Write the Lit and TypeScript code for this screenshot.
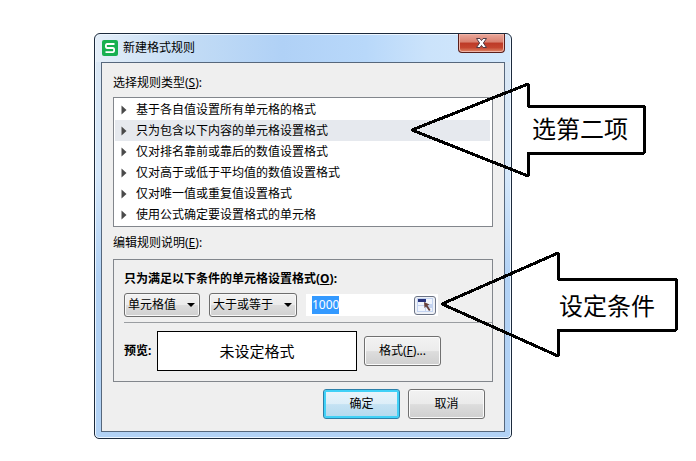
import { LitElement, html, css } from "lit";
import { customElement, state, query } from "lit/decorators.js";
import { classMap } from "lit/directives/class-map.js";

const RULE_TYPES = [
  "基于各自值设置所有单元格的格式",
  "只为包含以下内容的单元格设置格式",
  "仅对排名靠前或靠后的数值设置格式",
  "仅对高于或低于平均值的数值设置格式",
  "仅对唯一值或重复值设置格式",
  "使用公式确定要设置格式的单元格",
];

@customElement("callout-arrow")
class CalloutArrow extends LitElement {
  static properties = {
    points: {},
    box: {},
  };
  declare points: string;
  declare box: string;

  static styles = css`
    :host {
      display: flex;
      align-items: center;
      justify-content: flex-end;
      font-size: 24px;
      line-height: 32px;
      white-space: nowrap;
      pointer-events: none;
    }
    svg {
      position: absolute;
      inset: 0;
      width: 100%;
      height: 100%;
      overflow: visible;
    }
    polygon {
      fill: none;
      stroke: #000;
      stroke-width: 3;
      stroke-linejoin: round;
    }
  `;

  render() {
    return html`
      <svg viewBox=${this.box} shape-rendering="crispEdges" aria-hidden="true">
        <polygon points=${this.points}></polygon>
      </svg>
      <slot></slot>
    `;
  }
}

@customElement("app-root")
class AppRoot extends LitElement {
  @state() selected = 1;
  @query(".value") valueInput!: HTMLInputElement;

  static styles = css`
    :host {
      display: grid;
      grid-template-columns: 94fr 418fr 184fr;
      padding: 33px 0 22px;
      overflow: hidden;
      background: #fff;
      color: #000;
      font: 12px/16px "Noto Sans", "Noto Sans CJK SC", sans-serif;
    }
    * {
      box-sizing: border-box;
    }
    .dialog {
      position: relative;
      grid-column: 2;
      padding: 0 6px 6px;
      border: 1px solid #1c2a3c;
      border-radius: 6px 6px 5px 5px;
      background:
        linear-gradient(90deg, #e4eef8 0, #c3dcf5 22%, #b0d1f6 45%, #b8d8fa 65%, #cbe3fb 80%, #d3e8fc) 0 0 / 100% 28px no-repeat,
        linear-gradient(#dbe7f3 0, #d5e8fb 35%, #b2d2f5 60%, #b2d2f5);
      box-shadow: inset 0 0 0 1px #edf6ff;
    }
    .titlebar {
      display: flex;
      align-items: flex-start;
      height: 28px;
    }
    .logo {
      flex: none;
      width: 16px;
      height: 16px;
      margin: 6px 5px 0 1px;
    }
    h1 {
      flex: 1;
      margin: 6px 0 0;
      font-size: 12px;
      line-height: 16px;
      font-weight: 400;
    }
    button {
      font: inherit;
      color: inherit;
      padding: 0;
    }
    .close {
      display: grid;
      place-items: center;
      width: 47px;
      height: 19px;
      border: 1px solid #5a1f1c;
      border-top: 0;
      border-radius: 0 0 4px 4px;
      background: linear-gradient(#eaa79b 0, #d9806f 45%, #bd3a27 50%, #c4452f 75%, #e08a6a);
      box-shadow: inset 0 0 0 1px #f0b5a8;
    }
    .close svg {
      width: 13px;
      height: 12px;
    }
    .panel {
      padding: 12px 11px 12px;
      border: 1px solid #56677c;
      background: #efefef;
    }
    .label {
      display: block;
      line-height: 16px;
    }
    .rules {
      margin: 6px 0 8px;
      padding: 1px;
      border: 1px solid #82868c;
      background: #fff;
      list-style: none;
    }
    .rule {
      display: flex;
      align-items: center;
      gap: 9px;
      height: 21px;
      padding-left: 6px;
      border-right: 1px solid #fff;
      cursor: default;
    }
    .rule svg {
      width: 6px;
      height: 10px;
    }
    .rule.on {
      background: #e6e9ee;
    }
    .group {
      margin: 8px 0 7px;
      padding: 11px 0 10px 10px;
      border: 1px solid #82868c;
    }
    .strong {
      display: block;
      font-weight: 700;
    }
    .criteria {
      display: flex;
      align-items: center;
      margin-top: 6px;
      padding-bottom: 5px;
      border-bottom: 1px solid #9a9da1;
    }
    .pick {
      display: grid;
      align-items: center;
      height: 24px;
      margin-right: 9px;
    }
    .pick select,
    .pick svg {
      grid-area: 1 / 1;
    }
    .pick svg {
      justify-self: end;
      width: 8px;
      height: 4px;
      margin-right: 5px;
      pointer-events: none;
    }
    select {
      appearance: none;
      height: 24px;
      padding: 0 0 0 3px;
      border: 1px solid #6e6e6e;
      border-radius: 3px;
      background: linear-gradient(#f2f2f2, #ebebeb 50%, #dcdcdc 52%, #d0d0d0);
      box-shadow: inset 0 0 0 1px #f8f8f8;
      font: inherit;
      color: inherit;
    }
    .subject {
      width: 76px;
    }
    .operator {
      width: 88px;
    }
    .field {
      display: flex;
      align-items: center;
      width: 132px;
      height: 22px;
      padding: 0 2px 0 6px;
      background: #fff;
    }
    .value {
      flex: 1;
      min-width: 0;
      height: 18px;
      padding: 0;
      border: 0;
      outline: 0;
      background: none;
      font: inherit;
      line-height: 18px;
      color: inherit;
    }
    .value::selection {
      background: #3399ff;
      color: #fff;
    }
    .range {
      display: grid;
      place-items: center;
      width: 22px;
      height: 19px;
      border: 1px solid #6c7486;
      border-radius: 3px;
      background: #eef1f7;
    }
    .range svg {
      width: 16px;
      height: 14px;
    }
    .preview {
      display: flex;
      align-items: center;
      margin-top: 8px;
    }
    .preview .strong {
      width: 33px;
    }
    .sample {
      display: grid;
      place-items: center;
      width: 200px;
      height: 40px;
      margin-right: 7px;
      border: 1px solid #000;
      background: #fff;
      font-size: 15px;
      line-height: 20px;
    }
    .btn {
      width: 77px;
      height: 30px;
      border: 1px solid #707070;
      border-radius: 3px;
      background: linear-gradient(#f2f2f2, #ebebeb 50%, #dddddd 52%, #cfcfcf);
      box-shadow: inset 0 0 0 1px #fbfbfb;
    }
    .btn.primary {
      border-color: #2c7fa8;
      background: linear-gradient(#eaf5fb, #dceef8 50%, #c4e2f3 52%, #b4d9ee);
      box-shadow: inset 0 0 0 2px #41d1f7;
    }
    .actions {
      display: flex;
      justify-content: flex-end;
      gap: 8px;
      padding-right: 8px;
    }
    .first,
    .second {
      position: absolute;
    }
    .first {
      top: 48px;
      right: -135px;
      width: 236px;
      height: 95px;
      padding: 0 18px 2px 0;
    }
    .second {
      top: 217px;
      right: -166px;
      width: 238px;
      height: 106px;
      padding: 4px 22px 0 0;
    }
  `;

  firstUpdated() {
    this.valueInput.focus();
    this.valueInput.select();
  }

  private dropArrow() {
    return html`<svg viewBox="0 0 8 4" aria-hidden="true"><path d="M0 0h8L4 4z"></path></svg>`;
  }

  render() {
    return html`
      <main class="dialog" role="dialog" aria-labelledby="title">
        <header class="titlebar">
          <svg class="logo" viewBox="0 0 16 16" aria-hidden="true">
            <rect width="16" height="16" rx="2" fill="#17b050"></rect>
            <path d="M12.5 4H5.2C3.4 4 3.4 8 5.2 8h5.6c1.8 0 1.8 4.2 0 4.2H3.5" fill="none" stroke="#fff" stroke-width="1.8"></path>
          </svg>
          <h1 id="title">新建格式规则</h1>
          <button class="close" aria-label="关闭">
            <svg viewBox="0 0 13 12" aria-hidden="true">
              <path d="M1.5 1.5H5L6.5 3.6 8 1.5h3.5L8.4 6l3.1 4.5H8L6.5 8.4 5 10.5H1.5L4.6 6z" fill="#fff" stroke="#4f3a44" stroke-width="1"></path>
            </svg>
          </button>
        </header>
        <section class="panel">
          <span class="label" id="types">选择规则类型(<u>S</u>):</span>
          <ul class="rules" role="listbox" aria-labelledby="types">
            ${RULE_TYPES.map(
              (name, i) => html`
                <li
                  class=${classMap({ rule: true, on: i === this.selected })}
                  role="option"
                  aria-selected=${i === this.selected ? "true" : "false"}
                  @click=${() => (this.selected = i)}
                >
                  <svg viewBox="0 0 6 10" aria-hidden="true"><path d="M0.5 0.5L5.5 5 0.5 9.5z" fill="#4a4a4a"></path></svg>
                  ${name}
                </li>
              `,
            )}
          </ul>
          <span class="label" id="edit">编辑规则说明(<u>E</u>):</span>
          <div class="group" role="group" aria-labelledby="edit">
            <label class="strong" for="value">只为满足以下条件的单元格设置格式(<u>O</u>):</label>
            <div class="criteria">
              <div class="pick">
                <select class="subject" aria-label="条件对象">
                  <option>单元格值</option>
                </select>
                ${this.dropArrow()}
              </div>
              <div class="pick">
                <select class="operator" aria-label="比较方式">
                  <option>大于或等于</option>
                </select>
                ${this.dropArrow()}
              </div>
              <div class="field">
                <input class="value" id="value" type="text" value="1000" />
                <button class="range" aria-label="选择区域">
                  <svg viewBox="0 0 16 14" aria-hidden="true">
                    <rect width="16" height="14" fill="#c3d3f0"></rect>
                    <path d="M1 4h7v3H1zM1 8h7v5H1zM9 1h6v5H9zM9 10h6v3H9z" fill="#eff4fd"></path>
                    <rect x="1" y="1" width="8" height="3" fill="#26327c"></rect>
                    <path d="M7 4l5.5 2.5-2 1 3 4.5-1.5 1L9 8.5 7.5 10z" fill="#65403c"></path>
                  </svg>
                </button>
              </div>
            </div>
            <div class="preview">
              <span class="strong">预览:</span>
              <div class="sample">未设定格式</div>
              <button class="btn">格式(<u>F</u>)...</button>
            </div>
          </div>
          <footer class="actions">
            <button class="btn primary">确定</button>
            <button class="btn">取消</button>
          </footer>
        </section>
        <callout-arrow
          class="first"
          box="0 0 236 95"
          points="2,48 118,2 118,24 234,24 234,71 118,71 118,94"
        >选第二项</callout-arrow>
        <callout-arrow
          class="second"
          box="0 0 238 106"
          points="3,53 119,2 119,28 237,28 237,79 119,79 119,105"
        >设定条件</callout-arrow>
      </main>
    `;
  }
}
